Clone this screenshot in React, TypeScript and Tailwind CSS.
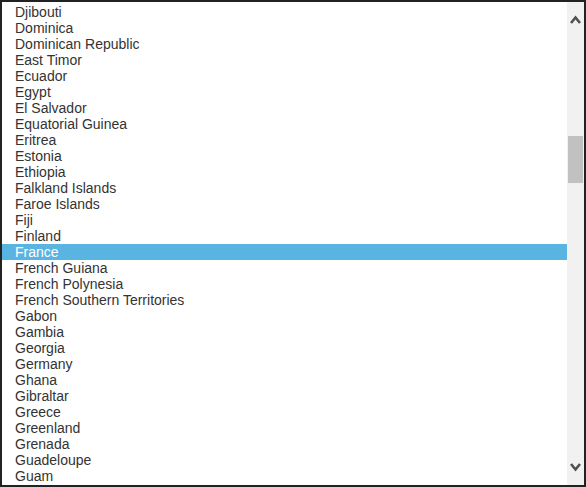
import React from "react";

const countries = [
  "Djibouti",
  "Dominica",
  "Dominican Republic",
  "East Timor",
  "Ecuador",
  "Egypt",
  "El Salvador",
  "Equatorial Guinea",
  "Eritrea",
  "Estonia",
  "Ethiopia",
  "Falkland Islands",
  "Faroe Islands",
  "Fiji",
  "Finland",
  "France",
  "French Guiana",
  "French Polynesia",
  "French Southern Territories",
  "Gabon",
  "Gambia",
  "Georgia",
  "Germany",
  "Ghana",
  "Gibraltar",
  "Greece",
  "Greenland",
  "Grenada",
  "Guadeloupe",
  "Guam",
];

export default function App() {
  return (
    <div
      className="w-[586px] h-[487px] border-2 border-[#222] bg-white flex overflow-hidden"
      style={{ fontFamily: '"Liberation Sans", Arial, sans-serif' }}
    >
      <div className="flex-1 overflow-hidden pt-[2px]">
        {countries.map((c) => {
          const sel = c === "France";
          return (
            <div
              key={c}
              className={
                "h-4 leading-4 text-[14px] pl-[13px] whitespace-nowrap " +
                (sel ? "bg-[#5ab4e1] text-white" : "text-[#333]")
              }
            >
              {c}
            </div>
          );
        })}
      </div>
      <div className="w-[17px] bg-[#f1f1f1] flex flex-col items-center relative">
        <div className="h-[17px] w-full flex items-center justify-center mt-[9px]">
          <svg width="11" height="9" viewBox="0 0 11 9">
            <path d="M1 8 L5.5 2.5 L10 8" fill="none" stroke="#505050" strokeWidth="2.6" />
          </svg>
        </div>
        <div className="absolute left-[1px] top-[134px] w-[15px] h-[47px] bg-[#c1c1c1]" />
        <div className="flex-1" />
        <div className="h-[17px] w-full flex items-center justify-center mb-[9px]">
          <svg width="11" height="9" viewBox="0 0 11 9">
            <path d="M1 1 L5.5 6.5 L10 1" fill="none" stroke="#505050" strokeWidth="2.6" />
          </svg>
        </div>
      </div>
    </div>
  );
}
